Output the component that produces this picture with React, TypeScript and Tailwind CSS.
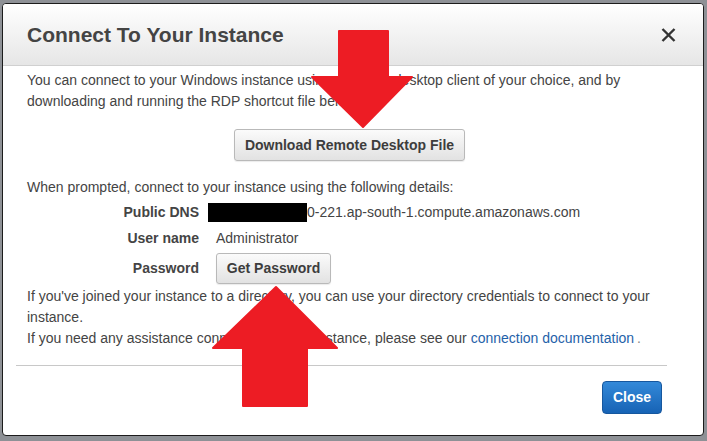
import React from 'react';

const font = { fontFamily: '"Liberation Sans", Arial, sans-serif' };

const GrayButton = ({ children, className = '' }: { children: React.ReactNode; className?: string }) => (
    <button className={`flex items-center justify-center whitespace-nowrap rounded-[3px] border border-[#b9b9b9] bg-gradient-to-b from-[#fbfbfb] to-[#e2e2e2] text-[14px] font-bold text-[#3d3d3d] shadow-[0_1px_1px_rgba(0,0,0,0.08)] ${className}`}>
        {children}
    </button>
);

const Arrows = () => (
    <svg className="pointer-events-none absolute left-0 top-0" width="707" height="441" viewBox="0 0 707 441">
        {/* down arrow over the download button */}
        <polygon
            points="339,31 388,31 388,77 412,77 363,127 312,77 339,77"
            fill="#ed1c24"
            stroke="#ed1c24"
            strokeWidth="2"
            strokeLinejoin="round"
        />
        {/* up arrow under Get Password */}
        <polygon
            points="276,287 337,348 307,348 307,406 243,406 243,348 213,348"
            fill="#ed1c24"
            stroke="#ed1c24"
            strokeWidth="2"
            strokeLinejoin="round"
        />
    </svg>
);

export default function App() {
    return (
        <div className="relative h-[441px] w-[707px] overflow-hidden bg-[#8e9196] pl-[2px] pt-[3px]" style={font}>
            {/* Modal */}
            <div className="flex h-[433px] w-[702px] flex-col overflow-hidden rounded-[4px] border border-[#1c1c1c] bg-white">
                {/* Header */}
                <div className="flex h-[62px] shrink-0 items-center justify-between border-b border-[#d0d0d0] bg-gradient-to-b from-white to-[#e6e6e6] pl-[24px] pr-[27px]">
                    <h1 className="text-[21px] font-bold text-[#444]">Connect To Your Instance</h1>
                    <svg width="15" height="14" viewBox="0 0 15 14">
                        <path d="M1.5 1 L13.5 13 M13.5 1 L1.5 13" stroke="#333" strokeWidth="2.4" strokeLinecap="butt" />
                    </svg>
                </div>

                {/* Body */}
                <div className="flex flex-col px-[24px] pt-[4px] text-[14px] leading-[21px] text-[#444]">
                    <p>
                        You can connect to your Windows instance using a remote desktop client of your choice, and by
                        <br />
                        downloading and running the RDP shortcut file below:
                    </p>

                    <GrayButton className="ml-[207px] mt-[17px] h-[32px] w-[231px]">Download Remote Desktop File</GrayButton>

                    <p className="mt-[16px]">When prompted, connect to your instance using the following details:</p>

                    {/* Details */}
                    <div className="mt-[3px] flex h-[22px] items-center">
                        <span className="w-[172px] text-right font-bold">Public DNS</span>
                        <span className="ml-[9px] flex items-center">
                            <span className="inline-block h-[19px] w-[99px] bg-black" />
                            <span>0-221.ap-south-1.compute.amazonaws.com</span>
                        </span>
                    </div>
                    <div className="mt-[4px] flex h-[22px] items-center">
                        <span className="w-[172px] text-right font-bold">User name</span>
                        <span className="ml-[17px]">Administrator</span>
                    </div>
                    <div className="mt-[4px] flex h-[31px] items-center">
                        <span className="w-[172px] text-right font-bold">Password</span>
                        <GrayButton className="ml-[17px] h-[31px] w-[115px]">Get Password</GrayButton>
                    </div>

                    <p className="mt-[2px]">
                        If you've joined your instance to a directory, you can use your directory credentials to connect to your
                        <br />
                        instance.
                        <br />
                        If you need any assistance connecting to your instance, please see our{' '}
                        <a href="#" className="text-[#1f62a9]">connection documentation</a>
                        <span className="ml-[3px] text-[#888]">.</span>
                    </p>
                </div>

                {/* Footer */}
                <div className="ml-[13px] mt-[16px] w-[651px] border-t border-[#c8c8c8]">
                    <div className="flex justify-end pr-[5px] pt-[15px]">
                        <button className="h-[33px] w-[60px] rounded-[4px] border border-[#16579e] bg-gradient-to-b from-[#3389d9] to-[#1763b5] text-[14px] font-bold text-white">
                            Close
                        </button>
                    </div>
                </div>
            </div>

            <Arrows />
        </div>
    );
}
